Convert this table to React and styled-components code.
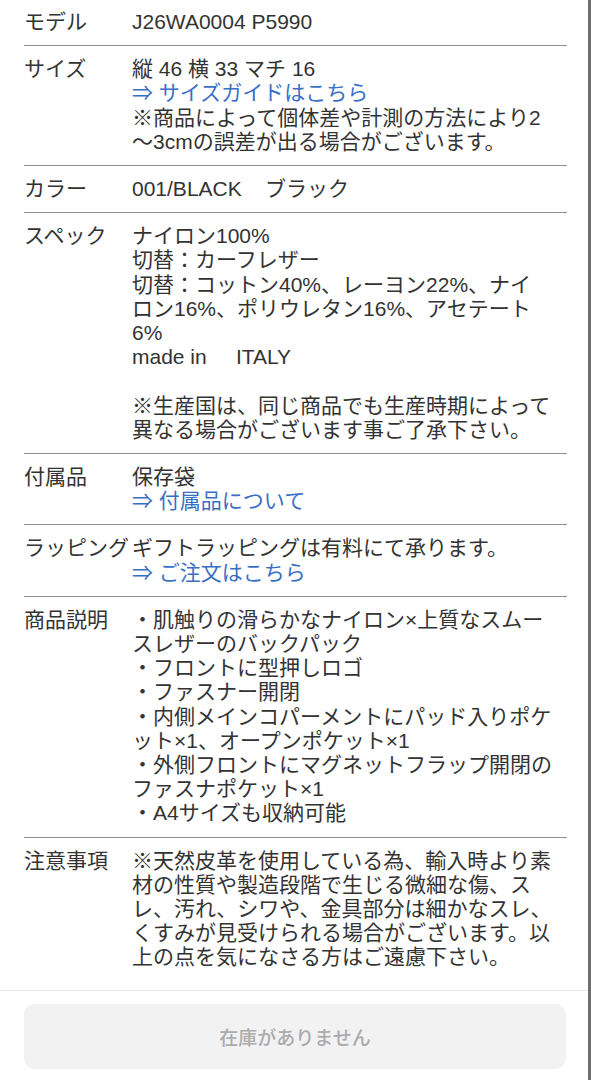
import React from "react";
import styled, { createGlobalStyle } from "styled-components";

const GlobalStyle = createGlobalStyle`
  html, body {
    margin: 0;
    padding: 0;
    background: #ffffff;
  }
  body {
    font-family: "Liberation Sans", "Noto Sans CJK JP", sans-serif;
    color: #333333;
  }
`;

const Page = styled.div`
  display: flex;
  flex-direction: column;
  min-height: 1080px;
  box-sizing: border-box;
  border-right: 3px solid #6e6e6e;
  background: #ffffff;
`;

const SpecList = styled.dl`
  margin: 0;
  padding: 0 21px 0 24px;
`;

const SpecRow = styled.div`
  display: grid;
  grid-template-columns: 108px 1fr;
  padding: 11px 0;
  border-bottom: 1px solid #8f8f8f;
  font-size: 21px;
  line-height: 24.2px;

  &:first-child {
    padding-top: 10px;
  }

  &:last-child {
    border-bottom: none;
    padding-bottom: 20px;
  }
`;

const Label = styled.dt`
  margin: 0;
  white-space: nowrap;
  color: #333333;
`;

const Value = styled.dd`
  margin: 0;
  color: #333333;
`;

const Line = styled.div`
  white-space: pre;
  min-height: 24.2px;
`;

const GuideLink = styled.a`
  color: #3a6fc6;
  text-decoration: none;
`;

const Footer = styled.div`
  border-top: 1px solid #e8e8e8;
  padding: 13px 22px 13px 24px;
`;

const SoldOutButton = styled.button`
  display: flex;
  align-items: center;
  justify-content: center;
  width: 100%;
  height: 65px;
  border: none;
  border-radius: 10px;
  background: #f2f2f2;
  color: #ababab;
  font-family: "Liberation Sans", "Noto Sans CJK JP", sans-serif;
  font-size: 19px;
  font-weight: 500;
  cursor: default;
`;

const specs = [
  { label: "モデル", lines: ["J26WA0004 P5990"] },
  {
    label: "サイズ",
    lines: [
      "縦 46 横 33 マチ 16",
      { link: "⇒ サイズガイドはこちら" },
      "※商品によって個体差や計測の方法により2",
      "〜3cmの誤差が出る場合がございます。",
    ],
  },
  { label: "カラー", lines: ["001/BLACK    ブラック"] },
  {
    label: "スペック",
    lines: [
      "ナイロン100%",
      "切替：カーフレザー",
      "切替：コットン40%、レーヨン22%、ナイ",
      "ロン16%、ポリウレタン16%、アセテート",
      "6%",
      "made in     ITALY",
      "",
      "※生産国は、同じ商品でも生産時期によって",
      "異なる場合がございます事ご了承下さい。",
    ],
  },
  {
    label: "付属品",
    lines: ["保存袋", { link: "⇒ 付属品について" }],
  },
  {
    label: "ラッピング",
    lines: ["ギフトラッピングは有料にて承ります。", { link: "⇒ ご注文はこちら" }],
  },
  {
    label: "商品説明",
    lines: [
      "・肌触りの滑らかなナイロン×上質なスムー",
      "スレザーのバックパック",
      "・フロントに型押しロゴ",
      "・ファスナー開閉",
      "・内側メインコパーメントにパッド入りポケ",
      "ット×1、オープンポケット×1",
      "・外側フロントにマグネットフラップ開閉の",
      "ファスナポケット×1",
      "・A4サイズも収納可能",
    ],
  },
  {
    label: "注意事項",
    lines: [
      "※天然皮革を使用している為、輸入時より素",
      "材の性質や製造段階で生じる微細な傷、ス",
      "レ、汚れ、シワや、金具部分は細かなスレ、",
      "くすみが見受けられる場合がございます。以",
      "上の点を気になさる方はご遠慮下さい。",
    ],
  },
];

const App = () => {
  return (
    <Page>
      <GlobalStyle />
      <SpecList>
        {specs.map((spec) => (
          <SpecRow key={spec.label}>
            <Label>{spec.label}</Label>
            <Value>
              {spec.lines.map((line, i) => (
                <Line key={i}>
                  {typeof line === "string" ? (
                    line
                  ) : (
                    <GuideLink href="#">{line.link}</GuideLink>
                  )}
                </Line>
              ))}
            </Value>
          </SpecRow>
        ))}
      </SpecList>

      <Footer>
        <SoldOutButton disabled>在庫がありません</SoldOutButton>
      </Footer>
    </Page>
  );
};

export default App;
